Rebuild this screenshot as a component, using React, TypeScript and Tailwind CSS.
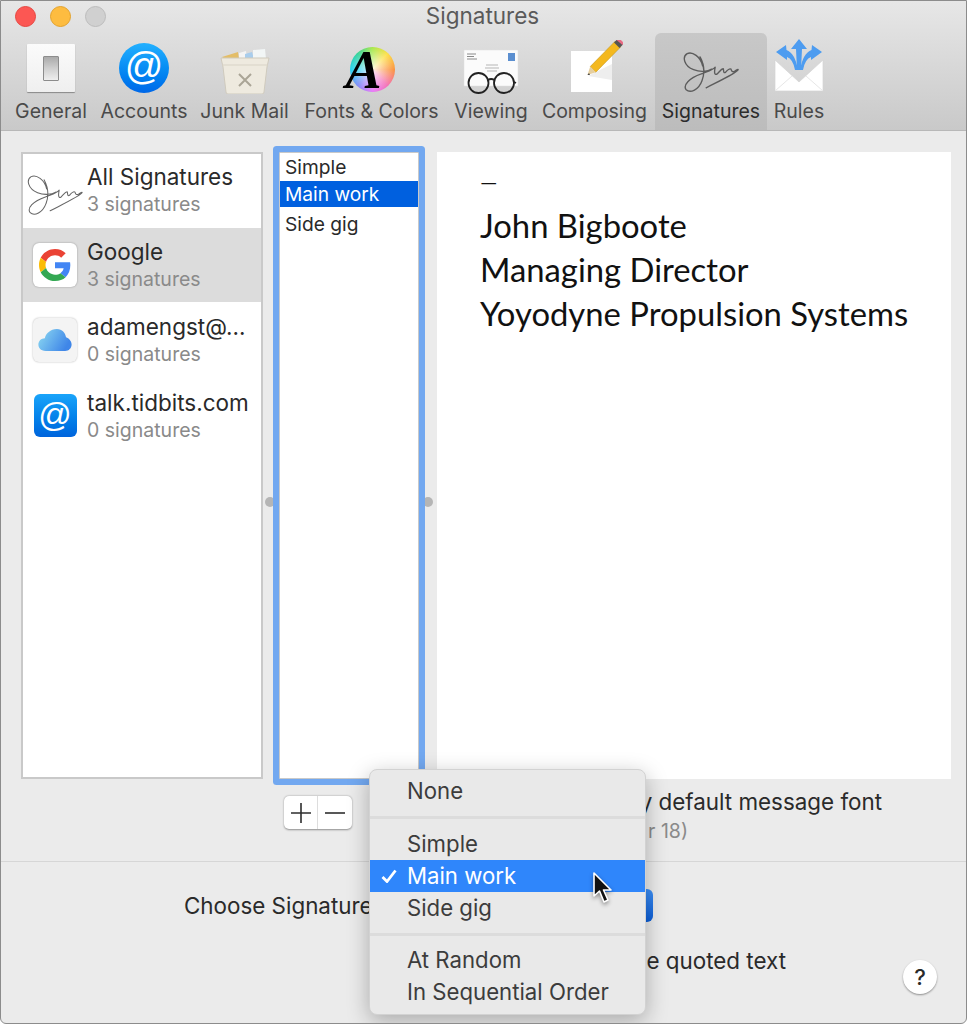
import React from "react";

const sigPath =
  "M664 196 C658 168 632 150 616 158 C600 168 606 196 636 208 C656 216 680 214 692 206 M656 168 C668 190 672 216 662 242 C652 270 626 282 613 270 C602 256 622 234 660 221 C680 213 695 210 703 200 C700 215 700 225 708 222 C716 215 722 204 728 205 C730 212 728 220 735 216 C742 208 748 203 752 206 C754 213 756 216 764 212 C770 208 775 205 774 208 C772 216 730 236 675 264";

function Signature({ w, h, color, sw }: { w: number; h: number; color: string; sw: number }) {
  return (
    <svg width={w} height={h} viewBox="600 150 180 130" fill="none">
      <path d={sigPath} stroke={color} strokeWidth={sw} strokeLinecap="round" strokeLinejoin="round" />
    </svg>
  );
}

function GeneralIcon() {
  return (
    <div className="mb-[2px] w-[48px] h-[48px] bg-gradient-to-b from-[#fbfbfb] to-[#efefef] shadow-[0_1px_1px_rgba(0,0,0,0.35)] rounded-[1px] flex items-center justify-center">
      <div className="w-[16px] h-[25px] bg-gradient-to-b from-[#aaaaaa] via-[#cfcfcf] to-[#eeeeee] border border-[#8c8c8c] rounded-[1px]" />
    </div>
  );
}

function AccountsIcon() {
  return (
    <div className="mb-[1px] w-[50px] h-[50px] rounded-full bg-gradient-to-b from-[#22b0ff] to-[#0068e8] flex items-center justify-center text-white text-[38px] leading-none font-['Liberation_Sans',sans-serif] pb-[5px]">
      @
    </div>
  );
}

function JunkIcon() {
  return (
    <svg width="50" height="46" viewBox="0 0 50 46">
      <path d="M2 9 L18 4 L19 11 L4 11Z" fill="#e3bd68" />
      <path d="M19 5 L26 3 L27 11 L19 11Z" fill="#f4f4f4" />
      <path d="M25 6 L32 4 L34 11 L25 11Z" fill="#a9cdec" />
      <path d="M33 2 L45 1 L46 11 L33 11Z" fill="#f2f6f6" />
      <path d="M1 10 H49 L47 19 L44 44 Q44 46 42 46 H8 Q6 46 6 44 L3 19Z" fill="#eeeadf" stroke="#cfcabd" strokeWidth="1" />
      <path d="M2 17 H48" stroke="#d8d3c6" strokeWidth="1" />
      <path d="M19 26 L31 38 M31 26 L19 38" stroke="#aaa596" strokeWidth="2" />
    </svg>
  );
}

function FontsIcon() {
  return (
    <div className="mb-[2px] ml-[1px] relative w-[45px] h-[45px] rounded-full bg-[radial-gradient(circle,rgba(255,255,255,0.85)_0%,rgba(255,255,255,0)_70%),conic-gradient(#a8e84a,#fde047_12%,#fb923c_25%,#f472b6_38%,#e879f9_50%,#818cf8_62%,#22d3ee_75%,#34d399_88%,#a8e84a)]">
      <span className="absolute left-[-4px] top-[-2px] text-black text-[54px] leading-[50px] font-bold italic font-['Liberation_Serif',serif]">
        A
      </span>
    </div>
  );
}

function ViewingIcon() {
  return (
    <svg width="58" height="47" viewBox="0 0 58 47">
      <rect x="2" y="3" width="54" height="36" fill="#fbfbfb" stroke="#dddddd" strokeWidth="0.5" />
      <path d="M5 7 H14 M5 9.5 H12 M5 12 H15" stroke="#8a8a8a" strokeWidth="1" />
      <rect x="46" y="6" width="7" height="8" fill="#5b8fd0" />
      <path d="M24 18 H36 M23 21 H37 M25 24 H35" stroke="#b5b5b5" strokeWidth="1" />
      <circle cx="16.5" cy="36" r="10" fill="none" stroke="#222222" strokeWidth="1.8" />
      <circle cx="42" cy="36" r="10" fill="none" stroke="#222222" strokeWidth="1.8" />
      <path d="M26 33 Q29 31 32.5 33 M52 35 L54 36" stroke="#222222" strokeWidth="1.8" fill="none" />
    </svg>
  );
}

function ComposingIcon() {
  return (
    <svg className="ml-[4px] mb-[2px]" width="52" height="52" viewBox="0 0 52 52">
      <rect x="0" y="11" width="41" height="41" fill="#ffffff" />
      <path d="M17 36 L41 24 L41 40Z" fill="#eeeeee" />
      <path d="M44.2 1.2 L49.8 6.8 L24.8 32.2 L19.2 26.6 Z" fill="#f4b81e" stroke="#b98a10" strokeWidth="0.5" />
      <path d="M19.2 26.6 L24.8 32.2 L16.5 35Z" fill="#e6cfa0" />
      <path d="M18 33 L19 35 L16.5 35Z" fill="#444444" />
      <path d="M43 2.5 L46.5 -1 L52 4.5 L48.5 8Z" fill="#555555" />
      <path d="M45.5 0 Q48 -2 51 1 Q53 3 51.5 5Z" fill="#e86a83" />
    </svg>
  );
}

function RulesIcon() {
  return (
    <svg className="mb-[2px]" width="50" height="54" viewBox="0 0 50 54">
      <path d="M1 22 L25 44 L49 22 V53 H1Z" fill="#ffffff" stroke="#d4d4d4" strokeWidth="0.7" />
      <path d="M1 53 L18 38 M49 53 L32 38" stroke="#e6e6e6" strokeWidth="1" />
      <path d="M25 1 L33 11 H28 L27 32 H23 L22 11 H17Z" fill="#4d9cf0" />
      <path d="M2 14 L12 7 L12.5 12 Q21 15 24 32 L21 32 Q19 21 13 19 L13 22Z" fill="#4d9cf0" />
      <path d="M48 14 L38 7 L37.5 12 Q29 15 26 32 L29 32 Q31 21 37 19 L37 22Z" fill="#4d9cf0" />
    </svg>
  );
}

function ToolItem({ label, width, active, children }: { label: string; width: string; active?: boolean; children: React.ReactNode }) {
  return (
    <div className={`${width} h-[97px] flex flex-col items-center rounded-t-[6px] ${active ? "bg-gradient-to-b from-[#c8c8c8] to-[#bcbcbc]" : ""}`}>
      <div className="h-[61px] flex items-end justify-center">{children}</div>
      <div className={`mt-[4px] text-[19.5px] leading-[26px] whitespace-nowrap ${active ? "text-[#2c2c2c]" : "text-[#4a4a4a]"}`}>{label}</div>
    </div>
  );
}

function GoogleG() {
  return (
    <svg width="32" height="32" viewBox="0 0 48 48">
      <path fill="#EA4335" d="M24 9.5c3.54 0 6.71 1.22 9.21 3.6l6.85-6.85C35.9 2.38 30.47 0 24 0 14.62 0 6.51 5.38 2.56 13.22l7.98 6.19C12.43 13.72 17.74 9.5 24 9.5z" />
      <path fill="#4285F4" d="M46.98 24.55c0-1.57-.15-3.09-.38-4.55H24v9.02h12.94c-.58 2.96-2.26 5.48-4.78 7.18l7.73 6c4.51-4.18 7.09-10.36 7.09-17.65z" />
      <path fill="#FBBC05" d="M10.53 28.59c-.48-1.45-.76-2.99-.76-4.59s.27-3.14.76-4.59l-7.98-6.19C.92 16.46 0 20.12 0 24c0 3.88.92 7.54 2.56 10.78l7.97-6.19z" />
      <path fill="#34A853" d="M24 48c6.48 0 11.93-2.13 15.89-5.81l-7.73-6c-2.15 1.45-4.92 2.3-8.16 2.3-6.26 0-11.57-4.22-13.47-9.91l-7.98 6.19C6.51 42.62 14.62 48 24 48z" />
    </svg>
  );
}

function CloudIcon() {
  return (
    <svg width="36" height="24" viewBox="0 0 36 26">
      <defs>
        <linearGradient id="cl" x1="0" y1="0" x2="1" y2="0.4">
          <stop offset="0" stopColor="#8fdcf2" />
          <stop offset="1" stopColor="#3f86e8" />
        </linearGradient>
      </defs>
      <path d="M8 25 C2 25 0 21 0 18 C0 14 3 11 7 11 C8 6 13 1 20 1 C26 1 29 5 30 10 C33 11 36 14 36 18 C36 22 33 25 29 25Z" fill="url(#cl)" />
    </svg>
  );
}

function AccountRow({ title, sub, height, selected, children }: { title: string; sub: string; height: string; selected?: boolean; children: React.ReactNode }) {
  return (
    <div className={`${height} flex items-center ${selected ? "bg-[#dcdcdc]" : ""}`}>
      <div className="w-[64px] shrink-0 flex items-center justify-center">{children}</div>
      <div className="flex flex-col min-w-0">
        <div className="text-[22.5px] leading-[29px] text-[#2a2a2a] whitespace-nowrap">{title}</div>
        <div className="text-[19.5px] leading-[27px] text-[#8a8a8a] whitespace-nowrap">{sub}</div>
      </div>
    </div>
  );
}

function MenuRow({ label, active }: { label: string; active?: boolean }) {
  return (
    <div className={`h-[32px] flex items-center text-[22.2px] ${active ? "bg-[#2f86fb] text-white" : "text-[#3c3c3c]"}`}>
      <div className="w-[37px] flex justify-center">
        {active && (
          <svg width="16" height="14" viewBox="0 0 16 14" fill="none">
            <path d="M1.5 8 L6 12.5 L14.5 1.5" stroke="#ffffff" strokeWidth="2.8" />
          </svg>
        )}
      </div>
      <span className="whitespace-nowrap">{label}</span>
    </div>
  );
}

function MenuSep({ h }: { h: string }) {
  return (
    <div className={`${h} flex items-center`}>
      <div className="w-full h-[3px] bg-[#dcdcdc]" />
    </div>
  );
}

export default function App() {
  return (
    <div className="relative w-[967px] h-[1024px] overflow-hidden bg-[#ebebeb] border border-[#8c8c8c] rounded-b-[6px] font-['Inter','Liberation_Sans',sans-serif]">
      {/* Title + toolbar */}
      <div className="h-[130px] bg-gradient-to-b from-[#e7e7e7] to-[#c9c9c9] border-b border-[#b8b8b8]">
        <div className="h-[31px] grid grid-cols-[1fr_auto_1fr] items-center">
          <div className="flex gap-[14px] pl-[14px]">
            <div className="w-[21px] h-[21px] rounded-full bg-[#fc5753] border border-[#e64640]" />
            <div className="w-[21px] h-[21px] rounded-full bg-[#fdbc40] border border-[#e3a22c]" />
            <div className="w-[21px] h-[21px] rounded-full bg-[#d0d0d0] border border-[#bcbcbc]" />
          </div>
          <div className="text-[22.5px] leading-[29px] text-[#5a5a5a] pb-[2px] mr-[2px]">Signatures</div>
          <div />
        </div>
        <div className="flex pl-[7px] pt-[1px]">
          <ToolItem label="General" width="w-[86px]"><GeneralIcon /></ToolItem>
          <ToolItem label="Accounts" width="w-[100px]"><AccountsIcon /></ToolItem>
          <ToolItem label="Junk Mail" width="w-[101px]"><JunkIcon /></ToolItem>
          <ToolItem label="Fonts & Colors" width="w-[153px]"><FontsIcon /></ToolItem>
          <ToolItem label="Viewing" width="w-[86px]"><ViewingIcon /></ToolItem>
          <ToolItem label="Composing" width="w-[121px]"><ComposingIcon /></ToolItem>
          <ToolItem label="Signatures" width="w-[112px]" active>
            <div className="mb-[1px]"><Signature w={58} h={42} color="#5c5c5c" sw={4.2} /></div>
          </ToolItem>
          <ToolItem label="Rules" width="w-[64px]"><RulesIcon /></ToolItem>
        </div>
      </div>

      {/* Main */}
      <div className="h-[731px] border-b border-[#d6d6d6] pl-[20px] pt-[21px]">
        <div className="flex h-[627px]">
          <div className="w-[242px] bg-white border-2 border-[#c9c9c9] overflow-hidden">
            <AccountRow title="All Signatures" sub="3 signatures" height="h-[74px] pb-[2px]">
              <div className="mt-[10px]"><Signature w={58} h={42} color="#666666" sw={3.2} /></div>
            </AccountRow>
            <AccountRow title="Google" sub="3 signatures" height="h-[74px]" selected>
              <div className="w-[44px] h-[44px] bg-white rounded-[6px] shadow-[0_0_2px_rgba(0,0,0,0.35)] flex items-center justify-center">
                <GoogleG />
              </div>
            </AccountRow>
            <AccountRow title="adamengst@..." sub="0 signatures" height="h-[76px]">
              <div className="w-[44px] h-[44px] bg-[#f4f4f4] rounded-[6px] shadow-[0_0_2px_rgba(0,0,0,0.3)] flex items-center justify-center">
                <CloudIcon />
              </div>
            </AccountRow>
            <AccountRow title="talk.tidbits.com" sub="0 signatures" height="h-[75px]">
              <div className="w-[43px] h-[43px] rounded-[6px] bg-gradient-to-b from-[#1aa4fa] to-[#0064dc] flex items-center justify-center text-white text-[33px] leading-none font-['Liberation_Sans',sans-serif] pb-[3px]">
                @
              </div>
            </AccountRow>
          </div>
          <div className="w-[16px] pl-[2px] pt-[345px]">
            <div className="w-[10px] h-[10px] rounded-full bg-[#b5b5b5]" />
          </div>
          <div className="relative z-10 w-[140px] bg-white border border-[#c9c9c9] rounded-[1px] shadow-[0_0_0_6px_#72a8f0] text-[19.2px] text-[#2a2a2a]">
            <div className="h-[28px] flex items-center px-[5px]">Simple</div>
            <div className="h-[26px] flex items-center px-[5px] bg-[#0060df] text-white">Main work</div>
            <div className="h-[34px] flex items-center px-[5px]">Side gig</div>
          </div>
          <div className="w-[18px] pl-[4px] pt-[345px]">
            <div className="w-[10px] h-[10px] rounded-full bg-[#b5b5b5]" />
          </div>
          <div className="w-[514px] bg-white pl-[43px] pt-[8px] text-[32.8px] leading-[44px] text-[#111111] font-['Lato','Noto_Sans',sans-serif]">
            <div className="text-[22px]">—</div>
            <div>John Bigboote</div>
            <div>Managing Director</div>
            <div>Yoyodyne Propulsion Systems</div>
          </div>
        </div>
        <div className="flex ml-[263px] mt-[9px]">
          <div className="w-[68px] h-[33px] mt-[8px] bg-white rounded-[5px] shadow-[0_0.5px_2px_rgba(0,0,0,0.4)] flex items-center">
            <div className="w-[34px] h-full flex items-center justify-center border-r border-[#dddddd]">
              <svg width="20" height="20" viewBox="0 0 20 20"><path d="M10 0V20M0 10H20" stroke="#2e2e2e" strokeWidth="1.6" /></svg>
            </div>
            <div className="w-[34px] h-full flex items-center justify-center">
              <svg width="20" height="20" viewBox="0 0 20 20"><path d="M0 10H20" stroke="#2e2e2e" strokeWidth="1.6" /></svg>
            </div>
          </div>
          <div className="w-[530px] text-right whitespace-nowrap">
            <div className="text-[22.4px] leading-[28px] text-[#2a2a2a]">y default message font</div>
            <div className="mt-[1px] mr-[194px] text-[19.5px] leading-[28px] text-[#8a8a8a]">r 18)</div>
          </div>
        </div>
      </div>

      {/* Bottom */}
      <div className="relative h-[161px]">
        <div className="flex items-center pl-[183px] pt-[27px]">
          <div className="w-[192px] text-[22.4px] leading-[33px] text-[#2a2a2a] whitespace-nowrap">Choose Signature</div>
          <div className="ml-[8px] w-[269px] h-[33px] rounded-[6px] bg-gradient-to-b from-[#3d90f7] to-[#0a5ed8]" />
        </div>
        <div className="flex justify-between pl-[340px] pr-[29px] pt-[25px]">
          <div className="w-[445px] text-right text-[22.4px] leading-[28px] text-[#2a2a2a] whitespace-nowrap">e quoted text</div>
          <div className="mt-[13px] w-[34px] h-[34px] rounded-full bg-white shadow-[0_1px_2px_rgba(0,0,0,0.4)] flex items-center justify-center text-[22px] font-medium text-[#2a2a2a]">?</div>
        </div>
      </div>

      {/* Popup menu */}
      <div className="absolute left-[368px] top-[768px] w-[277px] h-[246px] z-20 bg-[#e9e9e9] rounded-[8px] border border-[#d2d2d2] shadow-[0_6px_22px_rgba(0,0,0,0.28)] pt-[5px] overflow-hidden">
        <MenuRow label="None" />
        <MenuSep h="h-[21px]" />
        <MenuRow label="Simple" />
        <MenuRow label="Main work" active />
        <MenuRow label="Side gig" />
        <MenuSep h="h-[20px]" />
        <MenuRow label="At Random" />
        <MenuRow label="In Sequential Order" />
      </div>

      {/* Cursor */}
      <svg className="absolute left-[591px] top-[870px] z-30 drop-shadow-[0_2px_2px_rgba(0,0,0,0.4)]" width="24" height="34" viewBox="0 0 24 34">
        <path d="M2 2 L2 25 L7.5 20 L12 31 L16 29 L11.5 19 L19 19 Z" fill="#111111" stroke="#ffffff" strokeWidth="1.6" strokeLinejoin="round" />
      </svg>
    </div>
  );
}
